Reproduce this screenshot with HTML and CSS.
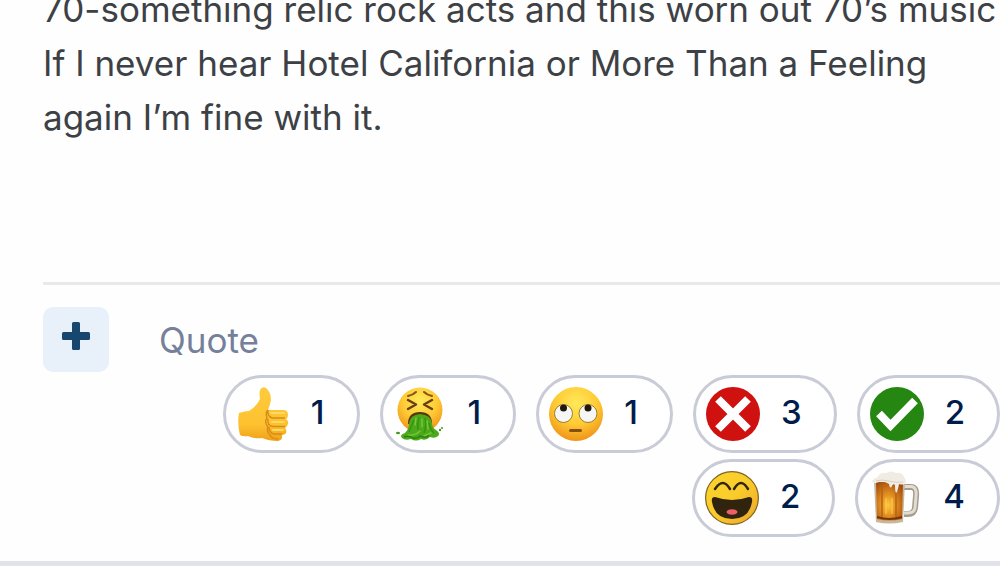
FILE: index.html
```
<!DOCTYPE html>
<html lang="en">
<head>
    <meta charset="utf-8">
    <title>Forum Post</title>
    <link rel="stylesheet" href="styles.css">
</head>
<body>
    <article class="post">
        <div class="post-body">
            70-something relic rock acts and this worn out 70’s music<br>
            If I never hear Hotel California or More Than a Feeling<br>
            again I’m fine with it.
        </div>
        <footer class="post-footer">
            <div class="post-controls">
                <button class="multiquote" type="button" aria-label="Multiquote">
                    <svg width="28" height="28" viewBox="0 0 28 28">
                        <path d="M11.500 0h5q1.500 0 1.500 1.500V10h8.500q1.500 0 1.500 1.500v5q0 1.500-1.500 1.500H18v8.500q0 1.500-1.500 1.500h-5q-1.500 0-1.500-1.500V18H1.500Q0 18 0 16.500v-5Q0 10 1.500 10H10V1.500Q10 0 11.500 0z" fill="#17466f"/>
                    </svg>
                </button>
                <a class="quote" href="#">Quote</a>
            </div>
            <div class="reactions">
                <button class="reaction" type="button">
                    <svg class="icon" viewBox="0 0 54 54" aria-label="Like">
                        <defs>
                            <linearGradient id="hand" x1="0" y1="0" x2="0" y2="1">
                                <stop offset="0" stop-color="#ffcb3d"/>
                                <stop offset=".7" stop-color="#fdc12f"/>
                                <stop offset="1" stop-color="#eea019"/>
                            </linearGradient>
                        </defs>
                        <path d="M3 26Q9 24 13 24Q21 19 24 12Q23 6 24 3Q26-1 30 1Q35 5 35 13Q34 18 32 23H47Q52 23 52 28Q52 31 50 32Q53 34 52 37Q51 40 49 41Q51 43 50 46Q49 48 46 48Q47 53 42 54Q33 54 26 51Q18 52 12 49Q7 50 4 48Q1 36 3 26z" fill="url(#hand)"/>
                        <path d="M32 23Q31 29 36 31H49M32 32Q31 39 37 39.500H49M33 40Q33 46 38 47H46M32 23Q29 25 31 31Q28 35 32 40Q30 44 34 48Q36 52 42 52" fill="none" stroke="#d98a17" stroke-width="1.400"/>
                        <path d="M35 26H48M36 35H48M37 43H47" stroke="#ffda62" stroke-width="2" stroke-linecap="round"/>
                    </svg>
                    <span>1</span>
                </button>
                <button class="reaction" type="button">
                    <svg class="icon" viewBox="0 0 54 54" aria-label="Puke">
                        <defs>
                            <radialGradient id="face" cx=".5" cy=".3" r=".7">
                                <stop offset="0" stop-color="#ffe95a"/>
                                <stop offset=".55" stop-color="#ffcb35"/>
                                <stop offset="1" stop-color="#ee9418"/>
                            </radialGradient>
                        </defs>
                        <circle cx="27" cy="23" r="22.500" fill="url(#face)"/>
                        <path d="M15 9Q20 8 23 5M39 9Q34 8 31 5" fill="none" stroke="#87541a" stroke-width="2" stroke-linecap="round"/>
                        <path d="M15 13L23 17.500L15 22M39 13L31 17.500L39 22" fill="none" stroke="#694016" stroke-width="2.500" stroke-linejoin="round" stroke-linecap="round"/>
                        <path d="M15 37Q15 25 27 25T39 37z" fill="#5b3410"/>
                        <path d="M16 36Q17 28 27 27Q38 28 39 36Q39 41 43 43Q48 46 45 49Q42 52 37 50Q33 54 28 52Q23 55 18 52Q12 54 9 51Q6 48 12 46Q16 42 16 36z" fill="#4da91c"/>
                        <path d="M21 33Q18 40 16 45M26 30Q24 37 25 43M32 31Q34 38 31 46M36 36Q37 42 41 46" fill="none" stroke="#38930f" stroke-width="1.500"/>
                        <path d="M23 31L22 38M29 32V40M34 34L35 42M27 44Q22 49 15 48M31 49L38 46" fill="none" stroke="#75c932" stroke-width="1.500" stroke-linecap="round"/>
                        <path d="M11 50Q16 48 20 51Q24 52 27 49Q33 52 36 48" fill="none" stroke="#2b8210" stroke-width="1.500"/>
                        <ellipse cx="5" cy="46" rx="2" ry="1.300" fill="#44991c"/>
                        <circle cx="47" cy="43" r="1.200" fill="#44991c"/>
                        <circle cx="49" cy="41" r="1" fill="#44991c"/>
                    </svg>
                    <span>1</span>
                </button>
                <button class="reaction" type="button">
                    <svg class="icon" viewBox="0 0 54 54" aria-label="Eye roll">
                        <circle cx="27" cy="27" r="27" fill="url(#face)"/>
                        <circle cx="14.500" cy="26.500" r="9" fill="#f6f6f4" stroke="#9b7d2b"/>
                        <circle cx="39" cy="26.500" r="9" fill="#f6f6f4" stroke="#9b7d2b"/>
                        <circle cx="14.500" cy="21" r="3.500" fill="#20170f"/>
                        <circle cx="39" cy="21" r="3.500" fill="#20170f"/>
                        <rect x="20" y="42" width="13" height="3" rx="1.500" fill="#845012"/>
                    </svg>
                    <span>1</span>
                </button>
                <button class="reaction" type="button">
                    <svg class="icon" viewBox="0 0 54 54" aria-label="Disagree">
                        <circle cx="27" cy="27" r="27" fill="#cf1110"/>
                        <path d="M12 12L42 42M42 12L12 42" stroke="#fff" stroke-width="8"/>
                    </svg>
                    <span>3</span>
                </button>
                <button class="reaction" type="button">
                    <svg class="icon" viewBox="0 0 54 54" aria-label="Agree">
                        <circle cx="27" cy="27" r="27" fill="#258611"/>
                        <path d="M9 26.500L20.500 38.500L45 13.500" fill="none" stroke="#fff" stroke-width="8"/>
                    </svg>
                    <span>2</span>
                </button>
                <button class="reaction" type="button">
                    <svg class="icon" viewBox="0 0 54 54" aria-label="Haha">
                        <defs>
                            <linearGradient id="laugh" x1="0" y1="0" x2="1" y2="1">
                                <stop offset="0" stop-color="#fbd42c"/>
                                <stop offset=".5" stop-color="#f9cc2b"/>
                                <stop offset="1" stop-color="#eda32b"/>
                            </linearGradient>
                        </defs>
                        <circle cx="27" cy="27" r="26.400" fill="url(#laugh)" stroke="#816424" stroke-width="1.200"/>
                        <path d="M10 18Q18 6 25 18M29 18Q36 6 43 18" fill="none" stroke="#33260f" stroke-width="2.500" stroke-linecap="round"/>
                        <path d="M10 26Q27 32 44 26Q48 26 47 31Q44 48 27 48T7 31Q6 26 10 26z" fill="#30240e"/>
                        <ellipse cx="27" cy="41" rx="5.500" ry="2.800" fill="#ec6068"/>
                    </svg>
                    <span>2</span>
                </button>
                <button class="reaction" type="button">
                    <svg class="icon" viewBox="0 0 54 54" aria-label="Cheers">
                        <defs>
                            <radialGradient id="beer" cx=".45" cy=".6" r=".7">
                                <stop offset="0" stop-color="#ffc83b"/>
                                <stop offset=".4" stop-color="#e38f22"/>
                                <stop offset="1" stop-color="#a0480b"/>
                            </radialGradient>
                        </defs>
                        <path d="M36 16H43Q49 16 48 25L47 37Q46 43 40 43H36" fill="none" stroke="#a59c8d" stroke-width="6"/>
                        <path d="M36 15.500H43Q49 16 48 25L47 37Q46 42 40 42H36" fill="none" stroke="#e1ddd3" stroke-width="3"/>
                        <path d="M6 11H37L35 51Q21 54 8 51z" fill="#c7b79c"/>
                        <path d="M8 11H35L34 48Q21 51 9 48z" fill="url(#beer)"/>
                        <path d="M14 15V46M28 17V46" stroke="#b36414" stroke-width="1.500"/>
                        <path d="M18 27V43M24 27V43" stroke="#ffd251" stroke-width="2" opacity=".5"/>
                        <path d="M9 46Q21 50 34 46" fill="none" stroke="#753508" stroke-width="2"/>
                        <path d="M4 10Q6 7 10 6Q12 1 18 2Q23-1 28 2Q34 1 36 6Q39 9 37 13Q34 14 31 13Q31 14 29 21Q27 24 27 14Q25 12 24 15Q22 19 21 13Q15 9 8 12Q4 12 4 10z" fill="#f0ece4"/>
                        <path d="M8 10Q14 8 20 10Q29 12 35 11" fill="none" stroke="#d8d0c3"/>
                    </svg>
                    <span>4</span>
                </button>
            </div>
        </footer>
    </article>
</body>
</html>
```

FILE: styles.css
```
* {
    box-sizing: border-box;
}

body {
    margin: 0;
    background-color: #e1e2ea;
    font-family: Inter, sans-serif;
    overflow: hidden;
}

.post {
    margin-top: -18px;
    padding: 0 0 24px 43px;
    background-color: #fefefe;
}

.post-body {
    color: #3d4145;
    font-size: 35px;
    line-height: 54px;
    white-space: nowrap;
}

.post-footer {
    margin-top: 138px;
    padding-top: 22px;
    border-top: 3px solid #e9e9eb;
}

.post-controls {
    display: flex;
    align-items: center;
    gap: 50px;
}

.multiquote {
    display: flex;
    justify-content: center;
    width: 66px;
    height: 65px;
    padding: 15px 0 0;
    border: none;
    border-radius: 10px;
    background-color: #e8f0f9;
    cursor: pointer;
}

.quote {
    color: #75809a;
    font-size: 35px;
    text-decoration: none;
}

.reactions {
    display: flex;
    flex-wrap: wrap;
    justify-content: flex-end;
    gap: 6px 20px;
    margin-top: 3px;
    margin-left: 116px;
}

.reaction {
    display: flex;
    align-items: center;
    gap: 21px;
    height: 78px;
    padding: 0 32px 0 10px;
    border: 3px solid #c9cbd6;
    border-radius: 39px;
    background-color: #fff;
    color: #001c4b;
    font-family: inherit;
    font-size: 33px;
    font-weight: 500;
    line-height: 40px;
    cursor: pointer;
}

.reaction span {
    padding-bottom: 5px;
}

.icon {
    width: 54px;
    height: 54px;
}
```
